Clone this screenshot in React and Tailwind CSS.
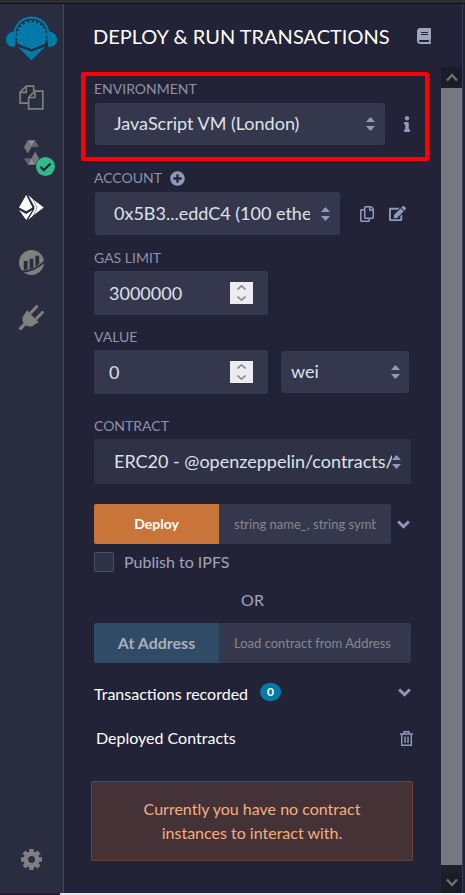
import React, { useState } from "react";
import { FaBook, FaInfo, FaPlusCircle, FaRegCopy, FaEdit } from "react-icons/fa";

function RemixLogo() {
  return (
    <svg width="51" height="46" viewBox="0 0 52 46" fill="#007aa6" aria-hidden="true">
      <path d="M8.500 18C9.500 7.500 17 1.200 26 1.200S42.500 7.500 43.500 18" fill="none" stroke="#007aa6" strokeWidth="2.200" />
      <path d="M10.500 15.500 9 31C3 31.500 0 28 0 23.500s3-8.500 10.500-8zM41.500 15.500 43 31c6 .5 9-3 9-7.500s-3-8.500-10.500-8z" />
      <path d="M12.500 28C8 15 16 5.800 26 5.800S44 15 39.500 28L26 33.500z" />
      <path
        d="M13 26.500C9.500 14 16.500 5.500 26 5.500S42.500 14 39 26.500"
        fill="none"
        stroke="#007aa6"
        strokeWidth="3.600"
        strokeDasharray="2.600 1.800"
      />
      <path d="m12 31 14 4.800L40 31 26 45z" />
    </svg>
  );
}

function FilesIcon() {
  return (
    <svg width="25" height="25" viewBox="0 0 26 26" fill="none" stroke="#808080" strokeWidth="1.700" aria-hidden="true">
      <path d="M10 18.800H1.200V7.500L7.500 1.200h7.800v5" />
      <path d="M1.200 7.700h6.300V1.200" />
      <path d="M10 13 16.500 6.300h8.300v18.500H10z" fill="#2a2c3f" />
      <path d="M10 13h6.500V6.500" />
    </svg>
  );
}

function SolidityIcon() {
  return (
    <svg width="15" height="25" viewBox="0 0 16 26" aria-hidden="true">
      <path d="M4 0h8L8 7z" fill="#8d8d8d" />
      <path d="M4 0 8 7 4 14 0 7z" fill="#77777a" />
      <path d="m12 0 4 7H8z" fill="#626268" />
      <path d="M12 26H4l4-7z" fill="#8d8d8d" />
      <path d="m12 26-4-7 4-7 4 7z" fill="#77777a" />
      <path d="m4 26-4-7h8z" fill="#626268" />
    </svg>
  );
}

function CheckBadge() {
  return (
    <svg className="absolute -right-4 -bottom-[11px]" width="19" height="19" viewBox="0 0 19 19" aria-hidden="true">
      <circle cx="9.500" cy="9.500" r="9.500" fill="#32ba89" />
      <path d="m4.500 9.800 3.300 3.400 6.700-6.800" fill="none" stroke="#222336" strokeWidth="2.200" />
    </svg>
  );
}

function DeployIcon() {
  return (
    <svg width="25" height="25" viewBox="0 0 26 26" fill="#fff" aria-hidden="true">
      <path d="M7.500 0 14 13l-6.500 4L0 13z" />
      <path d="m0 15.500 7.500 4.200 6.500-4.200L7.500 26z" />
      <path d="m9.500 0 5 4.500L18.500 13l-4 8.500-5 4.500L16 14.500V12z" />
      <path d="M15 5 25.800 13 15 21l4-8z" />
    </svg>
  );
}

function ChartIcon() {
  return (
    <svg width="25" height="25" viewBox="0 0 26 26" aria-hidden="true">
      <circle cx="13" cy="13" r="13" fill="#808080" />
      <path d="M5 11.500h4V20l-4 .8zM11 9h4v9.500l-4 1.200zM17 6h4v8.500L17 17.500z" fill="#2a2c3f" />
      <path d="M2 22.500C12 22.500 20 19 27 11.500" fill="none" stroke="#2a2c3f" strokeWidth="1.800" />
    </svg>
  );
}

function PlugIcon() {
  return (
    <svg width="25" height="25" viewBox="0 0 26 26" fill="#808080" aria-hidden="true">
      <path d="M8 7.500 18.500 18c-3 4.500-7.500 5.500-11.500 3l-4 4.700-3 .3V23.300L4.800 19C2.500 15 3.500 10.500 8 7.500z" />
      <path d="m6.500 8 11.500 11.500 2.500-1.500L8.500 5.500z" />
      <path d="m12.500 7.800 5.800-6M18.500 13.800l5.800-6" stroke="#808080" strokeWidth="3.200" strokeLinecap="round" />
    </svg>
  );
}

function GearIcon() {
  return (
    <svg width="21" height="21" viewBox="0 0 22 22" fill="#808080" aria-hidden="true">
      <g stroke="#808080" strokeWidth="4.600">
        <path d="M11 0v5M11 17v5M0 11h5M17 11h5" />
        <path d="m3.200 3.200 3.500 3.500M15.300 15.300l3.500 3.500M18.800 3.200l-3.500 3.500M6.700 15.300l-3.500 3.500" />
      </g>
      <circle cx="11" cy="11" r="6" fill="none" stroke="#808080" strokeWidth="4.800" />
    </svg>
  );
}

function ChevronIcon() {
  return (
    <svg width="13" height="9" viewBox="0 0 13 9" fill="none" stroke="currentColor" strokeWidth="3" aria-hidden="true">
      <path d="m1.200 1.500 5.300 5.200 5.300-5.200" />
    </svg>
  );
}

function TrashIcon() {
  return (
    <svg width="13" height="15" viewBox="0 0 13 15" fill="none" stroke="currentColor" strokeWidth="1.400" aria-hidden="true">
      <path d="M0 3h13M4 3V.8h5V3M1.700 3v11.300h9.600V3M5 5.500V12M8 5.500V12" />
    </svg>
  );
}

function Sorter({ className }) {
  return (
    <svg
      className={"pointer-events-none absolute top-1/2 -translate-y-1/2 " + className}
      width="9"
      height="14"
      viewBox="0 0 9 14"
      fill="#8f9abb"
      aria-hidden="true"
    >
      <path d="M4.500 0 9 5H0zM0 9h9l-4.500 5z" />
    </svg>
  );
}

function FieldLabel({ htmlFor, children }) {
  return (
    <label htmlFor={htmlFor} className="block text-sm leading-5 text-[#8f91a8]">
      {children}
    </label>
  );
}

function NumberField({ id, value, onChange }) {
  return (
    <div className="flex h-11 w-[174px] items-center rounded-xs bg-[#35384c] px-[15px]">
      <input
        id={id}
        type="number"
        value={value}
        onChange={(e) => onChange(Number(e.target.value))}
        className="w-0 min-w-0 flex-1 [appearance:textfield] bg-transparent text-lg text-[#dfe1ea] outline-none [&::-webkit-inner-spin-button]:appearance-none"
      />
      <div className="flex h-[22px] w-[23px] flex-col bg-[#ececf0]">
        <button
          type="button"
          aria-label="Increase"
          onClick={() => onChange(value + 1)}
          className="flex flex-1 items-center justify-center"
        >
          <svg width="9" height="5" viewBox="0 0 9 5" fill="none" stroke="#8b8b96" strokeWidth="1.600">
            <path d="m.5 4.500 4-3.700 4 3.700" />
          </svg>
        </button>
        <button
          type="button"
          aria-label="Decrease"
          onClick={() => onChange(value - 1)}
          className="flex flex-1 items-center justify-center"
        >
          <svg width="9" height="5" viewBox="0 0 9 5" fill="none" stroke="#8b8b96" strokeWidth="1.600">
            <path d="m.5.5 4 3.700 4-3.700" />
          </svg>
        </button>
      </div>
    </div>
  );
}

function Scrollbar() {
  return (
    <div className="flex w-[21px] flex-col bg-[#1f1f2e]" aria-hidden="true">
      <div className="flex h-[21px] items-center justify-center bg-[#1c1c28]">
        <svg width="12" height="9" viewBox="0 0 12 9" fill="none" stroke="#6f6f78" strokeWidth="2.400">
          <path d="m1 7.500 5-5.500 5 5.500" />
        </svg>
      </div>
      <div className="flex-1 bg-[#787880]" />
      <div className="h-[7px]" />
      <div className="flex h-[21px] items-center justify-center bg-[#1c1c28]">
        <svg width="12" height="9" viewBox="0 0 12 9" fill="none" stroke="#6f6f78" strokeWidth="2.400">
          <path d="m1 1.500 5 5.500 5-5.500" />
        </svg>
      </div>
    </div>
  );
}

const selectStyle =
  "w-full appearance-none rounded-xs pb-0.5 text-lg text-[#dfe1ea] outline-none";

const argumentStyle =
  "h-10 min-w-0 flex-1 rounded-r-xs bg-[#35384c] px-[15px] text-[13px] text-[#dfe1ea] outline-none placeholder:text-[#85878f]";

export default function App() {
  const [gas, setGas] = useState(3000000);
  const [value, setValue] = useState(0);

  return (
    <div className="flex min-h-screen flex-col bg-[#222336] font-[Lato,sans-serif] text-base text-[#a2a3bd]">
      <div className="h-1 border-b border-[#0f0f14] bg-[#2e2c34]" />

      <div className="flex flex-1 pr-0.5">
        <nav className="flex w-16 flex-col items-center border-r border-[#44465c] bg-[#2a2c3f] pt-3 pb-[23px]">
          <button type="button" aria-label="Home">
            <RemixLogo />
          </button>
          <div className="mt-[23px] flex flex-col items-center gap-[30px]">
            <button type="button" aria-label="File explorers">
              <FilesIcon />
            </button>
            <button type="button" aria-label="Solidity compiler" className="relative">
              <SolidityIcon />
              <CheckBadge />
            </button>
            <button type="button" aria-label="Deploy and run transactions">
              <DeployIcon />
            </button>
            <button type="button" aria-label="Analysis">
              <ChartIcon />
            </button>
            <button type="button" aria-label="Plugin manager">
              <PlugIcon />
            </button>
          </div>
          <button type="button" aria-label="Settings" className="mt-auto">
            <GearIcon />
          </button>
        </nav>

        <main className="flex min-w-0 flex-1 flex-col border-r border-[#3a3c52]">
          <header className="flex h-[63px] items-center justify-between pr-[30px] pl-[29px]">
            <h1 className="text-xl whitespace-nowrap text-white">DEPLOY &amp; RUN TRANSACTIONS</h1>
            <a href="#docs" aria-label="Documentation" className="text-[#a2a3bd]">
              <FaBook size={16} />
            </a>
          </header>

          <div className="flex flex-1">
            <div className="min-w-0 flex-1 pt-[5px]">
              <section className="mr-3 ml-[17px] h-[89px] rounded-xs border-4 border-[#fe0000] pt-[3px] pl-[9px]">
                <FieldLabel htmlFor="environment">ENVIRONMENT</FieldLabel>
                <div className="mt-1 flex items-center pl-px">
                  <div className="relative min-w-0 flex-1">
                    <select id="environment" className={selectStyle + " h-[42px] bg-[#35384c] pr-8 pl-[19px]"}>
                      <option>JavaScript VM (London)</option>
                    </select>
                    <Sorter className="right-[10px]" />
                  </div>
                  <button type="button" aria-label="Environment info" className="flex w-10 justify-center text-[#8f9abb]">
                    <FaInfo size={16} className="ml-1" />
                  </button>
                </div>
              </section>

              <div className="px-[30px]">
                <section className="mt-[7px]">
                  <div className="flex items-center gap-2">
                    <FieldLabel htmlFor="account">ACCOUNT</FieldLabel>
                    <button type="button" aria-label="Add account" className="text-[#8f9abb]">
                      <FaPlusCircle size={15} />
                    </button>
                  </div>
                  <div className="mt-1 flex items-center pl-px">
                    <div className="relative min-w-0 flex-1">
                      <select id="account" className={selectStyle + " h-[43px] bg-[#35384c] pr-[30px] pl-[19px]"}>
                        <option>0x5B3...eddC4 (100 ether)</option>
                      </select>
                      <Sorter className="right-[10px]" />
                    </div>
                    <div className="flex gap-[14px] pr-[5px] pl-[19px] text-[#8f9abb]">
                      <button type="button" aria-label="Copy account">
                        <FaRegCopy size={16} />
                      </button>
                      <button type="button" aria-label="Sign a message">
                        <FaEdit size={17} />
                      </button>
                    </div>
                  </div>
                </section>

                <section className="mt-[13px]">
                  <FieldLabel htmlFor="gas">GAS LIMIT</FieldLabel>
                  <div className="mt-[3px]">
                    <NumberField id="gas" value={gas} onChange={setGas} />
                  </div>
                </section>

                <section className="mt-3">
                  <FieldLabel htmlFor="value">VALUE</FieldLabel>
                  <div className="mt-[3px] flex items-center gap-[13px] pr-0.5">
                    <NumberField id="value" value={value} onChange={setValue} />
                    <div className="relative min-w-0 flex-1">
                      <select aria-label="Unit" className={selectStyle + " h-[42px] bg-[#35384c] pr-6 pl-[10px]"}>
                        <option>wei</option>
                        <option>gwei</option>
                        <option>finney</option>
                        <option>ether</option>
                      </select>
                      <Sorter className="right-[9px]" />
                    </div>
                  </div>
                </section>

                <section className="mt-[22px]">
                  <FieldLabel htmlFor="contract">CONTRACT</FieldLabel>
                  <div className="relative mt-[3px]">
                    <select id="contract" className={selectStyle + " h-[45px] bg-[#2f3145] pr-[19px] pl-5"}>
                      <option>ERC20 - @openzeppelin/contracts/token/ERC20/ERC20.sol</option>
                    </select>
                    <Sorter className="right-[10px]" />
                  </div>
                </section>

                <div className="mt-5 flex items-center">
                  <button type="button" className="h-10 w-[125px] rounded-l-xs bg-[#c97539] text-sm font-bold text-white">
                    Deploy
                  </button>
                  <input
                    type="text"
                    aria-label="Constructor arguments"
                    placeholder="string name_, string symbol_"
                    className={argumentStyle}
                  />
                  <button type="button" aria-label="Expand arguments" className="flex w-5 justify-center pl-1 text-[#8f9abb]">
                    <ChevronIcon />
                  </button>
                </div>

                <label className="mt-2 flex items-center gap-[10px]">
                  <input
                    type="checkbox"
                    className="size-5 appearance-none rounded-xs border border-[#4c4e62] bg-[#2f3145] checked:bg-[#007aa6]"
                  />
                  <span className="leading-5">Publish to IPFS</span>
                </label>

                <p className="mt-4 text-center leading-6">OR</p>

                <div className="mt-[11px] flex">
                  <button type="button" className="h-10 w-[125px] rounded-l-xs bg-[#2f4b66] text-base font-bold text-[#a9b0b9]">
                    At Address
                  </button>
                  <input
                    type="text"
                    aria-label="Contract address"
                    placeholder="Load contract from Address"
                    className={argumentStyle}
                  />
                </div>

                <div className="mt-[19px] flex items-center text-white">
                  <span className="leading-6">Transactions recorded</span>
                  <span className="mb-1 ml-3 rounded-full bg-[#007aa6] px-[7px] text-xs leading-[18px] font-bold">0</span>
                  <button type="button" aria-label="Expand transactions" className="mb-1 ml-auto text-[#8f9abb]">
                    <ChevronIcon />
                  </button>
                </div>

                <div className="mt-5 flex items-center justify-between pl-0.5 text-white">
                  <span className="leading-6">Deployed Contracts</span>
                  <button type="button" aria-label="Clear instances" className="-mr-0.5 text-[#8f9abb]">
                    <TrashIcon />
                  </button>
                </div>
              </div>

              <div className="mt-[31px] mr-7 mb-8 ml-[27px] rounded-xs border border-[#6b4437] bg-[#443236] px-10 py-[15px] text-center leading-6 text-[#f5ae81]">
                Currently you have no contract instances to interact with.
              </div>
            </div>
            <Scrollbar />
          </div>
        </main>
      </div>

      <div className="flex h-0.5">
        <div className="w-[60px] bg-[#2c1a30]" />
        <div className="flex-1 bg-[#e8e8ea]" />
      </div>
    </div>
  );
}
